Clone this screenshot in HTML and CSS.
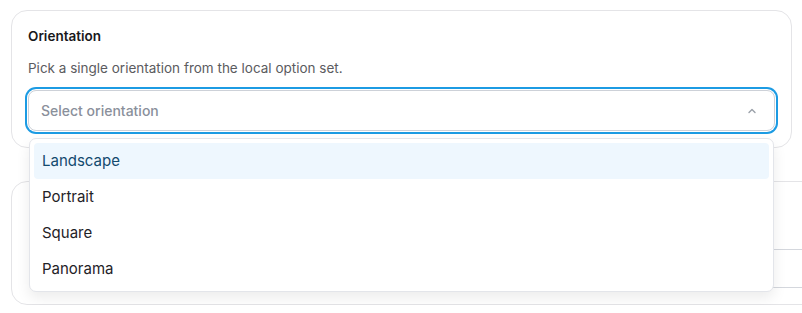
FILE: index.html
```html
<!DOCTYPE html>
<html lang="en">
<head>
    <meta charset="UTF-8">
    <meta name="viewport" content="width=device-width, initial-scale=1.0">
    <title>Orientation</title>
    <link rel="stylesheet" href="styles.css">
</head>
<body>
    <div class="page">
        <div class="card">
            <div class="field-label">Orientation</div>
            <p class="field-help">Pick a single orientation from the local option set.</p>
            <div class="select-wrap">
                <button type="button" class="select is-open">
                    <span class="select-placeholder">Select orientation</span>
                    <svg class="select-chevron" width="12" height="12" viewBox="0 0 12 12" fill="none">
                        <path d="M3 7.5 L6 4.5 L9 7.5" stroke="currentColor" stroke-width="1.4" stroke-linecap="round" stroke-linejoin="round"/>
                    </svg>
                </button>
                <ul class="select-menu">
                    <li class="select-option is-active">Landscape</li>
                    <li class="select-option">Portrait</li>
                    <li class="select-option">Square</li>
                    <li class="select-option">Panorama</li>
                </ul>
            </div>
        </div>

        <!-- second card sits under the open menu -->
        <div class="card card-wide">
            <div class="text-input"></div>
        </div>
    </div>
</body>
</html>
```

FILE: styles.css
```css
html, body {
    margin: 0;
    padding: 0;
    overflow: hidden;
    background: #fff;
}

body {
    font-family: Inter, "Noto Sans", sans-serif;
    color: #18181b;
}

.page {
    padding: 10px 10px 0 11px;
}

.card {
    border: 1px solid #e4e4e7;
    border-radius: 16px;
    padding: 16px;
    background: #fff;
}

.card-wide {
    margin-top: 33px;
    width: 840px;
    padding-top: 67px;
}

.field-label {
    font-size: 13.5px;
    font-weight: 600;
    line-height: 18px;
    color: #18181b;
}

.field-help {
    margin: 14px 0 13px;
    font-size: 13.5px;
    line-height: 18px;
    color: #5b5b60;
}

.select-wrap {
    position: relative;
}

.select {
    display: flex;
    align-items: center;
    justify-content: space-between;
    width: 100%;
    height: 41px;
    padding: 0 16px 0 12px;
    border: 1px solid #cdd1d8;
    border-radius: 8px;
    background: #fff;
    font-family: inherit;
    cursor: pointer;
    box-sizing: border-box;
}

.select.is-open {
    box-shadow: 0 0 0 1px #fff, 0 0 0 3px #1c9be3;
}

.select-placeholder {
    font-size: 14px;
    font-weight: 500;
    color: #8a909b;
}

.select-chevron {
    color: #9aa0a9;
}

.select-menu {
    position: absolute;
    top: 48px;
    left: 1px;
    right: 1px;
    z-index: 10;
    margin: 0;
    padding: 4px;
    list-style: none;
    background: #fff;
    border: 1px solid #e3e5ea;
    border-radius: 7px;
    box-shadow: 0 6px 14px rgba(0, 0, 0, 0.08);
}

.select-option {
    height: 36px;
    line-height: 36px;
    padding: 0 8px;
    font-size: 15px;
    color: #1f2227;
    border-radius: 4px;
}

.select-option.is-active {
    background: #eef7fe;
    color: #134a6e;
}

.text-input {
    height: 37px;
    margin-left: 6px;
    border: 1px solid #d4d7dd;
    border-radius: 8px;
}
```
